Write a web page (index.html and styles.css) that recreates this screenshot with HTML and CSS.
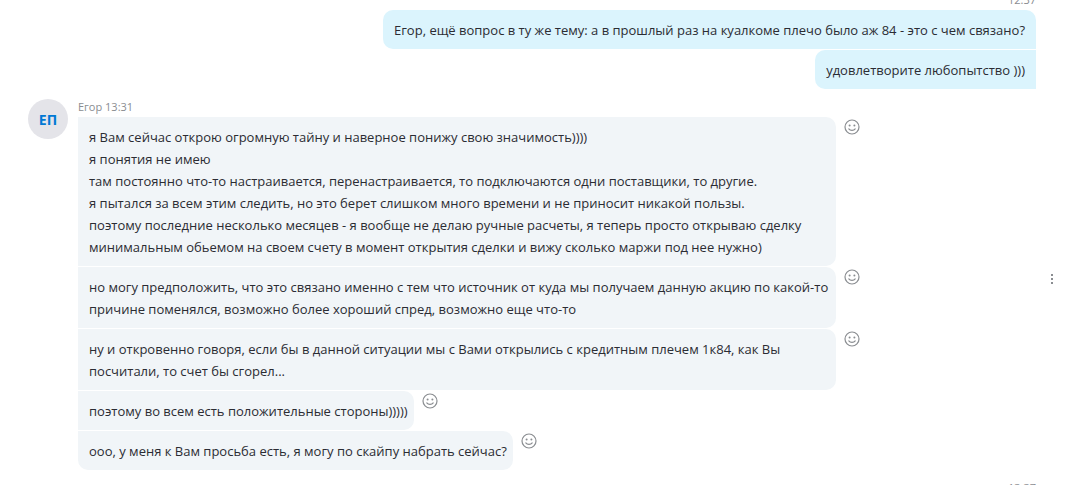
FILE: index.html
```
<!DOCTYPE html>
<html lang="ru">
<head>
  <meta charset="UTF-8" />
  <title>Чат</title>
  <link rel="stylesheet" href="styles.css">
</head>
<body>
  <svg class="sprite" aria-hidden="true">
    <symbol id="smile" viewBox="0 0 16 16">
      <circle cx="8" cy="8" r="7" fill="none" stroke="currentColor" stroke-width="1.2" />
      <circle cx="5.6" cy="6.5" r="1" fill="currentColor" />
      <circle cx="10.4" cy="6.5" r="1" fill="currentColor" />
      <path d="M4.8 9.9c1.4 1.9 5 1.9 6.4 0" fill="none" stroke="currentColor" stroke-width="1.2" stroke-linecap="round" />
    </symbol>
  </svg>

  <main class="chat">
    <section class="group sent">
      <div class="meta">12:37</div>
      <div class="row"><p class="bubble">Егор, ещё вопрос в ту же тему: а в прошлый раз на куалкоме плечо было аж 84 - это с чем связано?</p></div>
      <div class="row"><p class="bubble">удовлетворите любопытство )))</p></div>
    </section>

    <section class="group received">
      <div class="avatar">ЕП</div>
      <div class="messages">
        <div class="meta">Егор 13:31</div>
        <div class="row">
          <p class="bubble">я Вам сейчас открою огромную тайну и наверное понижу свою значимость))))<br>
            я понятия не имею<br>
            там постоянно что-то настраивается, перенастраивается, то подключаются одни поставщики, то другие.<br>
            я пытался за всем этим следить, но это берет слишком много времени и не приносит никакой пользы.<br>
            поэтому последние несколько месяцев - я вообще не делаю ручные расчеты, я теперь просто открываю сделку минимальным обьемом на своем счету в момент открытия сделки и вижу сколько маржи под нее нужно)</p>
          <button class="react" type="button" aria-label="Реакция"><svg><use href="#smile" /></svg></button>
        </div>
        <div class="row">
          <p class="bubble">но могу предположить, что это связано именно с тем что источник от куда мы получаем данную акцию по какой-то причине поменялся, возможно более хороший спред, возможно еще что-то</p>
          <button class="react" type="button" aria-label="Реакция"><svg><use href="#smile" /></svg></button>
          <button class="more" type="button" aria-label="Ещё"><svg viewBox="0 0 4 12"><path d="M1 1h2v2H1zM1 5h2v2H1zM1 9h2v2H1z" fill="currentColor" /></svg></button>
        </div>
        <div class="row">
          <p class="bubble">ну и откровенно говоря, если бы в данной ситуации мы с Вами открылись с кредитным плечем 1к84, как Вы посчитали, то счет бы сгорел...</p>
          <button class="react" type="button" aria-label="Реакция"><svg><use href="#smile" /></svg></button>
        </div>
        <div class="row">
          <p class="bubble">поэтому во всем есть положительные стороны)))))</p>
          <button class="react" type="button" aria-label="Реакция"><svg><use href="#smile" /></svg></button>
        </div>
        <div class="row">
          <p class="bubble">ооо, у меня к Вам просьба есть, я могу по скайпу набрать сейчас?</p>
          <button class="react" type="button" aria-label="Реакция"><svg><use href="#smile" /></svg></button>
        </div>
      </div>
    </section>

    <section class="group sent">
      <div class="meta">13:37</div>
    </section>
  </main>
</body>
</html>
```
FILE: styles.css
```
* {
  box-sizing: border-box;
}

body {
  margin: 0;
  background-color: #fff;
  color: #2b2c33;
  font-family: "Segoe UI", "Open Sans", "Noto Sans", sans-serif;
  font-size: 13px;
  line-height: 22px;
}

.sprite {
  display: none;
}

.chat {
  height: 100vh;
  overflow: hidden;
  padding: 0 20px 0 28px;
}

.group {
  margin-bottom: 8px;
}

/* the list is scrolled, the first time label is half cut */
.group:first-child {
  margin-top: -10px;
}

.meta {
  font-size: 11px;
  line-height: 20px;
  color: #8a8d91;
}

.row {
  display: flex;
  align-items: flex-start;
  margin-bottom: 1px;
}

.row:last-child {
  margin-bottom: 0;
}

.bubble {
  margin: 0;
  padding: 9px 11px 8px;
  border-radius: 10px;
}

.sent {
  padding-right: 26px;
}

.sent .meta {
  text-align: right;
}

.sent .row {
  justify-content: flex-end;
}

.sent .bubble {
  background-color: #dbf4fd;
  border-radius: 10px 0 0 10px;
}

.sent .meta + .row .bubble {
  border-top-right-radius: 10px;
}

.received {
  display: flex;
  gap: 10px;
}

.avatar {
  flex: none;
  width: 40px;
  height: 40px;
  margin-top: 2px;
  border-radius: 50%;
  background-color: #e4e4e9;
  color: #0078d4;
  font-size: 14px;
  font-weight: 700;
  line-height: 42px;
  text-align: center;
}

.messages {
  flex: 1;
}

.received .bubble {
  max-width: 77%;
  padding-right: 6px;
  background-color: #f1f5f8;
  border-radius: 0 10px 10px 0;
}

.received .row:last-child .bubble {
  border-bottom-left-radius: 10px;
}

button {
  padding: 0;
  border: none;
  background: none;
  color: #8a8d91;
  cursor: pointer;
}

button svg {
  display: block;
}

.react {
  margin: 2px 0 0 8px;
}

.react svg {
  width: 16px;
  height: 16px;
}

.more {
  margin: 6px 8px 0 auto;
}

.more svg {
  width: 4px;
  height: 12px;
}
```
